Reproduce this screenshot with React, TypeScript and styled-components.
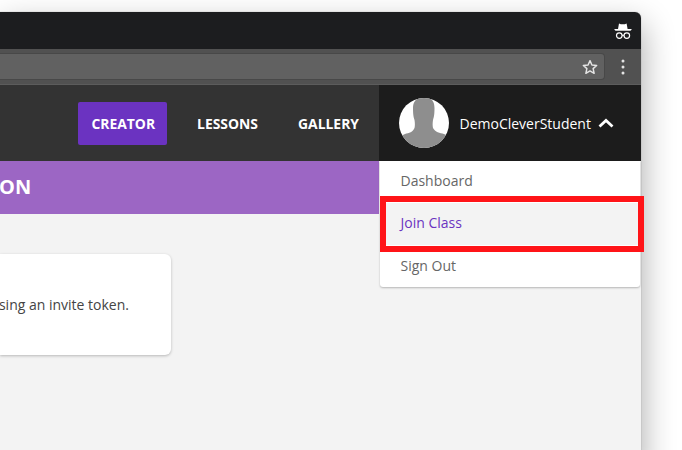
import React from "react";
import styled, { createGlobalStyle } from "styled-components";

const Global = createGlobalStyle`
  html, body { margin: 0; padding: 0; width: 682px; height: 450px; overflow: hidden; background: #fff; }
  body { font-family: "Open Sans", "Liberation Sans", sans-serif; }
`;
const Stage = styled.div`
  width: 682px; height: 450px; padding-top: 12px; box-sizing: border-box; overflow: hidden;
  background: #fff;
`;
const Win = styled.div`
  width: 641px; height: 460px; border-top-right-radius: 6px; overflow: visible; display: flex; flex-direction: column;
  background: #f3f3f3; box-shadow: 0 0 1px rgba(0,0,0,.5), 2px 12px 32px rgba(0,0,0,.32); position: relative;
`;
const TitleBar = styled.div`
  height: 37px; flex: none; background: #1c1d1f; border-top-right-radius: 6px; display: flex; justify-content: flex-end; align-items: center; padding-right: 9px;
`;
const Toolbar = styled.div`
  height: 36px; flex: none; background: #515151; display: flex; align-items: center; box-sizing: border-box; border-bottom: 1px solid #5c5c5c;
`;
const Omnibox = styled.div`
  width: 605px; height: 27px; box-sizing: border-box; background: #616161; border: 1px solid #484848; border-left: none; border-radius: 0 4px 4px 0; display: flex; align-items: center; justify-content: flex-end; padding-right: 6px;
`;
const Dots = styled.div`
  flex: 1; display: flex; justify-content: center;
`;
const Nav = styled.div`
  height: 76px; flex: none; background: #333; display: flex; justify-content: flex-end;
`;
const Links = styled.div`
  display: flex; align-items: center;
`;
const NavLink = styled.div<{ $active?: boolean }>`
  height: 43px; display: flex; align-items: center; box-sizing: border-box; padding: ${p => (p.$active ? "0 12px 0 13px" : "0 13px")}; margin-right: ${p => (p.$active ? 17 : 14)}px; border-radius: 2px;
  background: ${p => (p.$active ? "#6b33c1" : "transparent")}; color: #fff; font-size: 13.9px; font-weight: 700; letter-spacing: 0;
  &:last-child { margin-right: 7px; }
`;
const User = styled.div`
  width: 262px; box-sizing: border-box; background: #1c1c1c; display: flex; align-items: center; padding-left: 20px; color: #fff; font-size: 14px;
`;
const Avatar = styled.svg`
  width: 50px; height: 50px; flex: none; margin-right: 10.5px;
`;
const Chevron = styled.svg`
  width: 16px; height: 10px; margin-left: 7.5px;
`;
const Banner = styled.div`
  width: 379px; height: 53px; flex: none; box-sizing: border-box; padding-bottom: 2px; background: #9c66c4; color: #fff; font-size: 20px; font-weight: 700; display: flex; align-items: center; justify-content: flex-start; overflow: hidden;
`;
const BannerText = styled.span`
  margin-left: -1px;
`;
const Content = styled.div`
  flex: 1; padding-top: 40px;
`;
const Card = styled.div`
  width: 171px; height: 101px; box-sizing: border-box; background: #fff; border-radius: 0 6px 6px 0; box-shadow: 0 1px 3px rgba(0,0,0,.25);
  display: flex; justify-content: flex-end; align-items: center; padding: 0 42px 0 0; font-size: 14px; color: #444; white-space: nowrap;
`;
const Menu = styled.div`
  position: absolute; left: 380px; top: 149px; width: 260px; height: 126px; background: #fff; border-radius: 0 0 3px 3px; box-shadow: 0 1px 2px rgba(0,0,0,.25); display: flex; flex-direction: column;
`;
const MenuItem = styled.div<{ $current?: boolean }>`
  height: 42px; flex: none; box-sizing: border-box; display: flex; align-items: center; padding: 0 0 3px 20.5px; font-size: 14px;
  color: ${p => (p.$current ? "#6b33c1" : "#666")}; background: ${p => (p.$current ? "#f3f3f3" : "transparent")};
  &:nth-child(3) { padding-bottom: 1px; }
`;
const Highlight = styled.div`
  position: absolute; left: 0; top: 35px; width: 264px; height: 56px; box-sizing: border-box; border: 6px solid #ff1418;
`;

export default function App() {
  return (
    <>
      <Global />
      <Stage>
        <Win>
          <TitleBar>
            <svg width="18" height="18" viewBox="0 0 18 18" fill="none" aria-hidden="true">
              <path d="M4 7 L5 1.500 L6.800 2.200 H10.800 L12.600 1.500 L13.600 7 Z" fill="#fff" />
              <path d="M0.500 7 H17.500 V7.800 L16.500 8.800 H1.500 L0.500 7.800 Z" fill="#fff" />
              <circle cx="5.300" cy="13.600" r="2.800" stroke="#fff" strokeWidth="1.200" />
              <circle cx="12.800" cy="13.600" r="2.800" stroke="#fff" strokeWidth="1.200" />
              <path d="M8 13.300 H10.100" stroke="#fff" strokeWidth="1" />
            </svg>
          </TitleBar>
          <Toolbar>
            <Omnibox>
              <svg width="16" height="16" viewBox="0 0 24 24" fill="none" stroke="#e4e4e4" strokeWidth="2.200" strokeLinejoin="round" aria-hidden="true">
                <path d="M12 2.500 L14.900 9 L22 9.700 L16.700 14.500 L18.200 21.500 L12 17.900 L5.800 21.500 L7.300 14.500 L2 9.700 L9.100 9 Z" />
              </svg>
            </Omnibox>
            <Dots>
              <svg width="4" height="16" viewBox="0 0 4 16" fill="#e4e4e4" aria-hidden="true">
                <circle cx="2" cy="2" r="1.500" />
                <circle cx="2" cy="8" r="1.500" />
                <circle cx="2" cy="14" r="1.500" />
              </svg>
            </Dots>
          </Toolbar>
          <Nav>
            <Links>
              <NavLink $active>CREATOR</NavLink>
              <NavLink>LESSONS</NavLink>
              <NavLink>GALLERY</NavLink>
            </Links>
            <User>
              <Avatar viewBox="0 0 50 50" aria-hidden="true">
                <defs>
                  <clipPath id="avatar-clip"><circle cx="25" cy="25" r="25" /></clipPath>
                </defs>
                <circle cx="25" cy="25" r="25" fill="#fff" />
                <g clipPath="url(#avatar-clip)">
                  <path d="M20 0 H30 C33 1 35.500 4 35.500 10 C35.500 16 35 19 34 22 C33.500 25 33.500 28 34 30 C36 34 41 35 45 36 C48 37 50 39 50 41 V50 H0 V41 C1 39 3 37 6 36 C10 35 14 34 15.500 30 C16 28 16 25 15.500 22 C14.500 19 14 16 14 10 C14 4 17 1 20 0 Z" fill="#8e8e8e" />
                </g>
              </Avatar>
              DemoCleverStudent
              <Chevron viewBox="0 0 16 10" fill="none" stroke="#fff" strokeWidth="2.800" aria-hidden="true">
                <path d="M1.500 8.500 L8 2.500 L14.500 8.500" />
              </Chevron>
            </User>
          </Nav>
          <Banner><BannerText>ON</BannerText></Banner>
          <Content>
            <Card>sing an invite token.</Card>
          </Content>
          <Menu>
            <MenuItem>Dashboard</MenuItem>
            <MenuItem $current>Join Class</MenuItem>
            <MenuItem>Sign Out</MenuItem>
            <Highlight />
          </Menu>
        </Win>
      </Stage>
    </>
  );
}
